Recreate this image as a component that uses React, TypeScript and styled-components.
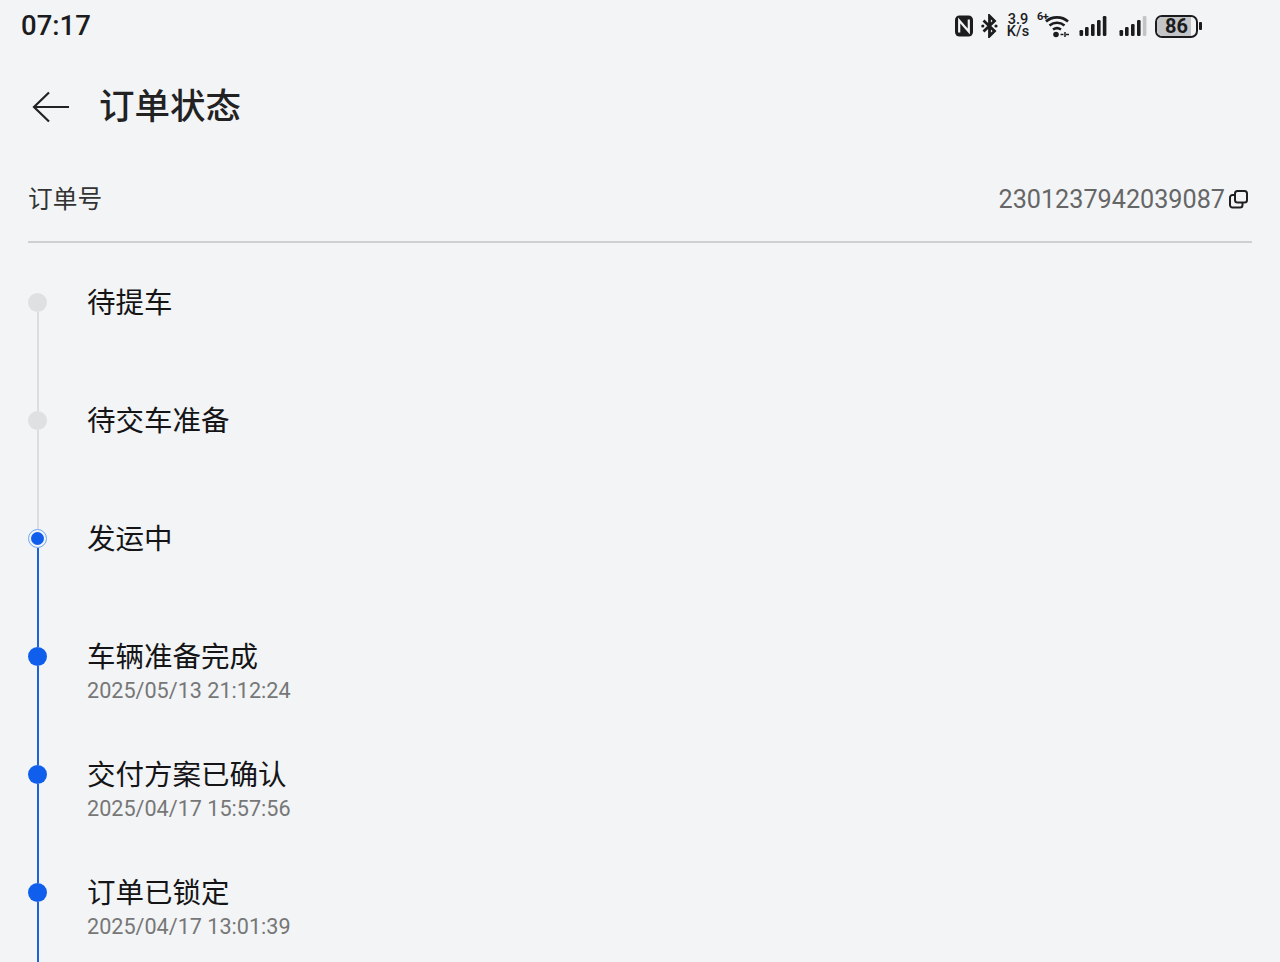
import React from 'react'
import styled, { createGlobalStyle } from 'styled-components'

const GlobalStyle = createGlobalStyle`
  html, body {
    margin: 0;
    padding: 0;
    height: 962px;
    overflow: hidden;
    background: #f2f4f6;
  }
`

type StepState = 'todo' | 'current' | 'done'

interface Step {
  title: string
  time?: string
  state: StepState
}

const steps: Step[] = [
  { title: '待提车', state: 'todo' },
  { title: '待交车准备', state: 'todo' },
  { title: '发运中', state: 'current' },
  { title: '车辆准备完成', time: '2025/05/13 21:12:24', state: 'done' },
  { title: '交付方案已确认', time: '2025/04/17 15:57:56', state: 'done' },
  { title: '订单已锁定', time: '2025/04/17 13:01:39', state: 'done' }
]

const NfcIcon = () => (
  <svg width="18" height="22" viewBox="0 0 18 22">
    <rect x="0" y="0.5" width="18" height="21" rx="4.5" fill="#1c1c1e" />
    <path d="M4.2 17.5V5.5l9.6 11V4.5" fill="none" stroke="#f2f4f6" strokeWidth="2.2" />
  </svg>
)

const BluetoothIcon = () => (
  <svg width="17" height="24" viewBox="0 0 17 24">
    <path d="M2.5 6.5l11 10.5L8.5 22V2l5 5-11 10.5" fill="none" stroke="#1c1c1e" strokeWidth="2.8" />
    <circle cx="1.8" cy="12" r="1.6" fill="#1c1c1e" />
    <circle cx="15" cy="12" r="1.6" fill="#1c1c1e" />
  </svg>
)

const WifiIcon = () => (
  <svg width="24" height="24" viewBox="0 0 24 24">
    <g fill="none" stroke="#1c1c1e" strokeWidth="2.6">
      <path d="M1 7.5C7 2 17 2 23 7.5" />
      <path d="M4.5 11.5c4.5-3.6 10.5-3.6 15 0" />
      <path d="M8 15.5c2.6-1.8 5.4-1.8 8 0" />
    </g>
    <circle cx="11" cy="20.5" r="2.8" fill="#1c1c1e" />
    <path d="M15.5 20.5h3M20 18v5M21 20.5h3" stroke="#1c1c1e" strokeWidth="1.5" />
  </svg>
)

const SignalIcon = ({ faded = false }: { faded?: boolean }) => (
  <svg width="28" height="22" viewBox="0 0 28 22">
    <rect x="0.5" y="15" width="3.6" height="6" rx="1.2" fill="#1c1c1e" />
    <rect x="6" y="12" width="3.6" height="9" rx="1.2" fill="#1c1c1e" />
    <rect x="12" y="9" width="3.6" height="12" rx="1.2" fill="#1c1c1e" />
    <rect x="18" y="5" width="3.6" height="16" rx="1.2" fill="#1c1c1e" />
    <rect x="23.8" y="1" width="3.6" height="20" rx="1.2" fill={faded ? '#c2c4c6' : '#1c1c1e'} />
  </svg>
)

const CopyIcon = () => (
  <svg width="19" height="19" viewBox="0 0 19 19">
    <rect x="6" y="1" width="12" height="11.5" rx="2.5" fill="none" stroke="#1f1f1f" strokeWidth="2" />
    <path d="M6 5H3.5A2.5 2.5 0 0 0 1 7.5v7.5A2.5 2.5 0 0 0 3.5 17.5H11a2.5 2.5 0 0 0 2.5-2.5v-2.5" fill="none" stroke="#1f1f1f" strokeWidth="2" />
  </svg>
)

const BackIcon = () => (
  <svg width="38" height="32" viewBox="0 0 38 32">
    <path d="M37 16H2.5M17 1.5L2 16l15 14.5" fill="none" stroke="#222" strokeWidth="2.2" />
  </svg>
)

export default function App() {
  return (
    <Page>
      <GlobalStyle />
      <StatusBar>
        <Clock>07:17</Clock>
        <StatusIcons>
          <NfcIcon />
          <BluetoothIcon />
          <Speed>{'3.9\nK/s'}</Speed>
          <WifiWrap>
            <WifiTag>6+</WifiTag>
            <WifiIcon />
          </WifiWrap>
          <SignalSlot>
            <SignalIcon />
          </SignalSlot>
          <SignalSlot>
            <SignalIcon faded />
          </SignalSlot>
          <Battery>
            <BatteryBody>
              <BatteryLevel style={{ width: '86%' }} />
              <BatteryText>86</BatteryText>
            </BatteryBody>
            <BatteryCap />
          </Battery>
        </StatusIcons>
      </StatusBar>

      <Header>
        <BackIcon />
        <Title>订单状态</Title>
      </Header>

      <OrderRow>
        <OrderLabel>订单号</OrderLabel>
        <OrderValue>
          <OrderNumber>2301237942039087</OrderNumber>
          <CopyIcon />
        </OrderValue>
      </OrderRow>

      <Timeline>
        {steps.map((step) => (
          <Row key={step.title}>
            <Marker>
              <Dot $state={step.state} />
              <Line $todo={step.state === 'todo'} />
            </Marker>
            <Texts>
              <StepTitle>{step.title}</StepTitle>
              {step.time && <StepTime>{step.time}</StepTime>}
            </Texts>
          </Row>
        ))}
      </Timeline>
    </Page>
  )
}

const Page = styled.div`
  width: 1280px;
  height: 962px;
  overflow: hidden;
  background: #f2f4f6;
  color: #1c1c1e;
  font-family: Roboto, 'Noto Sans CJK SC', sans-serif;
`

const StatusBar = styled.div`
  height: 50px;
  padding: 0 78px 0 21px;
  display: flex;
  align-items: center;
  justify-content: space-between;
`

const Clock = styled.div`
  padding-top: 1px;
  font-size: 27.5px;
  font-weight: 500;
  line-height: 50px;
`

const StatusIcons = styled.div`
  display: flex;
  align-items: center;
  gap: 8px;
  padding-top: 2px;
`

const Speed = styled.div`
  width: 24px;
  font-size: 14.5px;
  font-weight: 500;
  line-height: 12px;
  text-align: center;
  white-space: pre-line;
`

const WifiWrap = styled.div`
  position: relative;
  width: 24px;
  height: 24px;
  margin-left: 7px;
`

const WifiTag = styled.span`
  position: absolute;
  left: -8px;
  top: -4px;
  font-size: 11px;
  font-weight: 700;
  letter-spacing: -0.5px;
`

const SignalSlot = styled.div`
  display: flex;
  margin-left: 2px;
  & + & {
    margin-left: 4px;
  }
`

const Battery = styled.div`
  display: flex;
  align-items: center;
  gap: 1px;
`

const BatteryBody = styled.div`
  position: relative;
  box-sizing: border-box;
  width: 43px;
  height: 23px;
  border: 2px solid #1c1c1e;
  border-radius: 7px;
  overflow: hidden;
`

const BatteryLevel = styled.div`
  height: 100%;
  background: #c3c5c7;
`

const BatteryText = styled.span`
  position: absolute;
  inset: 0;
  display: flex;
  align-items: center;
  justify-content: center;
  font-size: 20px;
  font-weight: 700;
`

const BatteryCap = styled.div`
  width: 3px;
  height: 8px;
  border-radius: 1px;
  background: #1c1c1e;
`

const Header = styled.div`
  height: 114px;
  padding-left: 32px;
  display: flex;
  align-items: center;
  gap: 29px;
`

const Title = styled.h1`
  margin: 0;
  padding-bottom: 7px;
  font-size: 35.5px;
  font-weight: 500;
  color: #222;
`

const OrderRow = styled.div`
  margin: 0 28px;
  height: 70px;
  padding-bottom: 7px;
  display: flex;
  align-items: center;
  justify-content: space-between;
  border-bottom: 2px solid #cdcfd1;
`

const OrderLabel = styled.span`
  padding-bottom: 4px;
  font-size: 24.7px;
  color: #333;
`

const OrderValue = styled.div`
  display: flex;
  align-items: center;
  gap: 4px;
  padding-right: 4px;
`

const OrderNumber = styled.span`
  font-size: 25.2px;
  color: #666;
`

const Timeline = styled.div`
  padding: 50px 0 0 28px;
`

const Row = styled.div`
  height: 118px;
  display: flex;
  gap: 40px;
`

const Marker = styled.div`
  width: 19px;
  display: flex;
  flex-direction: column;
  align-items: center;
`

const Dot = styled.div<{ $state: StepState }>`
  box-sizing: border-box;
  flex: none;
  width: 19px;
  height: 19px;
  border-radius: 50%;
  background: ${(p) => (p.$state === 'todo' ? '#dfe0e2' : '#0f5fec')};
  ${(p) =>
    p.$state === 'current' &&
    `
    background: #0f5fec;
    background-clip: content-box;
    padding: 2px;
    border: 1.5px solid #6ea8f0;
  `}
`

const Line = styled.div<{ $todo: boolean }>`
  flex: 1;
  width: 2px;
  background: ${(p) => (p.$todo ? '#dcdde0' : '#1d62d8')};
`

const Texts = styled.div`
  margin-top: -6px;
`

const StepTitle = styled.div`
  font-size: 28.5px;
  line-height: 34px;
  color: #151517;
`

const StepTime = styled.div`
  margin-top: 1px;
  font-size: 21.6px;
  line-height: 30px;
  color: #777;
`
